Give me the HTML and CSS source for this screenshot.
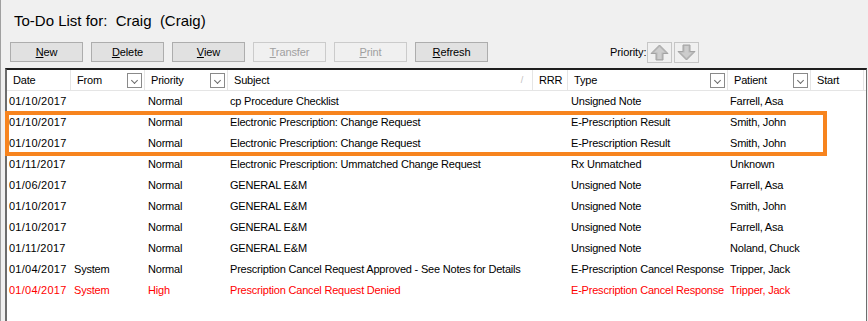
FILE: index.html
```html
<!DOCTYPE html>
<html lang="en">
<head>
  <meta charset="UTF-8">
  <title>To-Do List</title>
  <link rel="stylesheet" href="styles.css">
</head>
<body>
  <div class="todo-window">
    <div class="title">To-Do List for:&nbsp; Craig&nbsp; (Craig)</div>

    <div class="toolbar">
      <button class="btn"><u>N</u>ew</button>
      <button class="btn"><u>D</u>elete</button>
      <button class="btn"><u>V</u>iew</button>
      <button class="btn" disabled><u>T</u>ransfer</button>
      <button class="btn" disabled><u>P</u>rint</button>
      <button class="btn"><u>R</u>efresh</button>

      <div class="priority">
        <span class="priority-label">Priority:</span>
        <span class="arrow-btn">
          <svg width="19" height="17" viewBox="0 0 19 17">
            <path d="M9.5 1 L18 9.5 L13 9.5 L13 16 L6 16 L6 9.5 L1 9.5 Z" fill="#b9b9b9" stroke="#a3a3a3" stroke-width="1"/>
            <path d="M9.5 3 L15 8.5 L11.5 8.5 L11.5 15 L7.5 15 L7.5 8.5 L4 8.5 Z" fill="#cdcdcd"/>
          </svg>
        </span>
        <span class="arrow-btn">
          <svg width="19" height="17" viewBox="0 0 19 17">
            <path d="M9.5 16 L18 7.5 L13 7.5 L13 1 L6 1 L6 7.5 L1 7.5 Z" fill="#b9b9b9" stroke="#a3a3a3" stroke-width="1"/>
            <path d="M9.5 14 L15 8.5 L11.5 8.5 L11.5 2 L7.5 2 L7.5 8.5 L4 8.5 Z" fill="#cdcdcd"/>
          </svg>
        </span>
      </div>
    </div>

    <div class="list">
      <div class="list-row list-head">
        <div class="col">Date</div>
        <div class="col">From <span class="drop"></span></div>
        <div class="col">Priority <span class="drop"></span></div>
        <div class="col">Subject <span class="sort">/</span></div>
        <div class="col">RRR</div>
        <div class="col">Type <span class="drop"></span></div>
        <div class="col">Patient <span class="drop"></span></div>
        <div class="col">Start</div>
      </div>

      <div class="list-row">
        <div class="cell">01/10/2017</div><div class="cell"></div><div class="cell">Normal</div>
        <div class="cell">cp Procedure Checklist</div><div class="cell"></div>
        <div class="cell">Unsigned Note</div><div class="cell">Farrell, Asa</div><div class="cell"></div>
      </div>
      <div class="list-row">
        <div class="cell">01/10/2017</div><div class="cell"></div><div class="cell">Normal</div>
        <div class="cell">Electronic Prescription: Change Request</div><div class="cell"></div>
        <div class="cell">E-Prescription Result</div><div class="cell">Smith, John</div><div class="cell"></div>
      </div>
      <div class="list-row">
        <div class="cell">01/10/2017</div><div class="cell"></div><div class="cell">Normal</div>
        <div class="cell">Electronic Prescription: Change Request</div><div class="cell"></div>
        <div class="cell">E-Prescription Result</div><div class="cell">Smith, John</div><div class="cell"></div>
      </div>
      <div class="list-row">
        <div class="cell">01/11/2017</div><div class="cell"></div><div class="cell">Normal</div>
        <div class="cell">Electronic Prescription: Ummatched Change Request</div><div class="cell"></div>
        <div class="cell">Rx Unmatched</div><div class="cell">Unknown</div><div class="cell"></div>
      </div>
      <div class="list-row">
        <div class="cell">01/06/2017</div><div class="cell"></div><div class="cell">Normal</div>
        <div class="cell">GENERAL E&amp;M</div><div class="cell"></div>
        <div class="cell">Unsigned Note</div><div class="cell">Farrell, Asa</div><div class="cell"></div>
      </div>
      <div class="list-row">
        <div class="cell">01/10/2017</div><div class="cell"></div><div class="cell">Normal</div>
        <div class="cell">GENERAL E&amp;M</div><div class="cell"></div>
        <div class="cell">Unsigned Note</div><div class="cell">Smith, John</div><div class="cell"></div>
      </div>
      <div class="list-row">
        <div class="cell">01/10/2017</div><div class="cell"></div><div class="cell">Normal</div>
        <div class="cell">GENERAL E&amp;M</div><div class="cell"></div>
        <div class="cell">Unsigned Note</div><div class="cell">Farrell, Asa</div><div class="cell"></div>
      </div>
      <div class="list-row">
        <div class="cell">01/11/2017</div><div class="cell"></div><div class="cell">Normal</div>
        <div class="cell">GENERAL E&amp;M</div><div class="cell"></div>
        <div class="cell">Unsigned Note</div><div class="cell">Noland, Chuck</div><div class="cell"></div>
      </div>
      <div class="list-row">
        <div class="cell">01/04/2017</div><div class="cell">System</div><div class="cell">Normal</div>
        <div class="cell">Prescription Cancel Request Approved - See Notes for Details</div><div class="cell"></div>
        <div class="cell">E-Prescription Cancel Response</div><div class="cell">Tripper, Jack</div><div class="cell"></div>
      </div>
      <div class="list-row high">
        <div class="cell">01/04/2017</div><div class="cell">System</div><div class="cell">High</div>
        <div class="cell">Prescription Cancel Request Denied</div><div class="cell"></div>
        <div class="cell">E-Prescription Cancel Response</div><div class="cell">Tripper, Jack</div><div class="cell"></div>
      </div>

      <div class="highlight"></div>
    </div>
  </div>
</body>
</html>
```

FILE: styles.css
```css
* {
  margin: 0;
  padding: 0;
  box-sizing: border-box;
}

:root {
  --window: #f0f0f0;
  --btn-face: #e1e1e1;
  --btn-border: #adadad;
  --disabled: #a0a0a0;
  --grid-line: #e5e5e5;
  --orange: #f7841e;
  --red: #ff0000;
}

body {
  font-family: "Liberation Sans", Arial, sans-serif;
  background: var(--window);
  color: #000;
  width: 868px;
  height: 321px;
  overflow: hidden;
}

.todo-window {
  height: 100%;
  border-left: 1px solid #a0a0a0;
}

.title {
  padding: 11px 0 0 13px;
  font-size: 15px;
  line-height: 20px;
}

.toolbar {
  display: flex;
  align-items: center;
  gap: 8px;
  margin-top: 11px;
  padding-left: 9px;
  height: 20px;
}

.btn {
  width: 73px;
  height: 20px;
  background: var(--btn-face);
  border: 1px solid var(--btn-border);
  font-family: inherit;
  font-size: 11px;
  letter-spacing: -0.1px;
  color: #000;
}

.btn u {
  text-decoration-thickness: 1px;
  text-underline-offset: 1px;
}

.btn:disabled {
  background: #f0f0f0;
  border-color: #cbcbcb;
  color: var(--disabled);
}

.priority {
  display: flex;
  align-items: center;
  margin-left: 114px;
  height: 20px;
}

.priority-label {
  font-size: 11px;
  margin-right: 1px;
  letter-spacing: -0.1px;
}

.arrow-btn {
  display: flex;
  align-items: center;
  justify-content: center;
  width: 25px;
  height: 21px;
  border: 1px solid #c6c6c6;
  margin-right: 2px;
}

.list {
  position: relative;
  margin: 6px 0 0 4px;
  width: 862px;
  height: 260px;
  background: #fff;
  border-top: 2px solid #1e1e1e;
  border-left: 2px solid #6d6d6d;
  border-right: 1px solid #6d6d6d;
  font-size: 11px;
  letter-spacing: -0.2px;
}

.list-row {
  display: grid;
  grid-template-columns: 64px 74px 83px 305px 35px 160px 83px 53px;
  height: 21px;
  line-height: 21px;
}

.list-head {
  height: 21px;
  line-height: 20px;
  border-bottom: 1px solid var(--grid-line);
}

.col {
  display: flex;
  align-items: center;
  padding-left: 6px;
  border-right: 1px solid var(--grid-line);
  white-space: nowrap;
}

.drop {
  margin-left: auto;
  margin-right: 2px;
  width: 15px;
  height: 15px;
  border: 1px solid #8a8a8a;
  background: #fff;
  position: relative;
}

.drop::after {
  content: '';
  position: absolute;
  left: 4px;
  top: 4px;
  width: 4px;
  height: 4px;
  border-right: 1.5px solid #6a6a6a;
  border-bottom: 1.5px solid #6a6a6a;
  transform: rotate(45deg);
}

.sort {
  margin-left: auto;
  margin-right: 9px;
  color: #bdbdbd;
  font-size: 9px;
}

.cell {
  padding-left: 2px;
  white-space: nowrap;
}

.list-row .cell:nth-child(1) {
  letter-spacing: 0.25px;
}

.list-row .cell:nth-child(2),
.list-row .cell:nth-child(3),
.list-row .cell:nth-child(6) {
  padding-left: 3px;
}

.list-row.high {
  color: var(--red);
}

.highlight {
  position: absolute;
  left: -2px;
  top: 41px;
  width: 822px;
  height: 45px;
  border: 4px solid var(--orange);
  pointer-events: none;
}
```
